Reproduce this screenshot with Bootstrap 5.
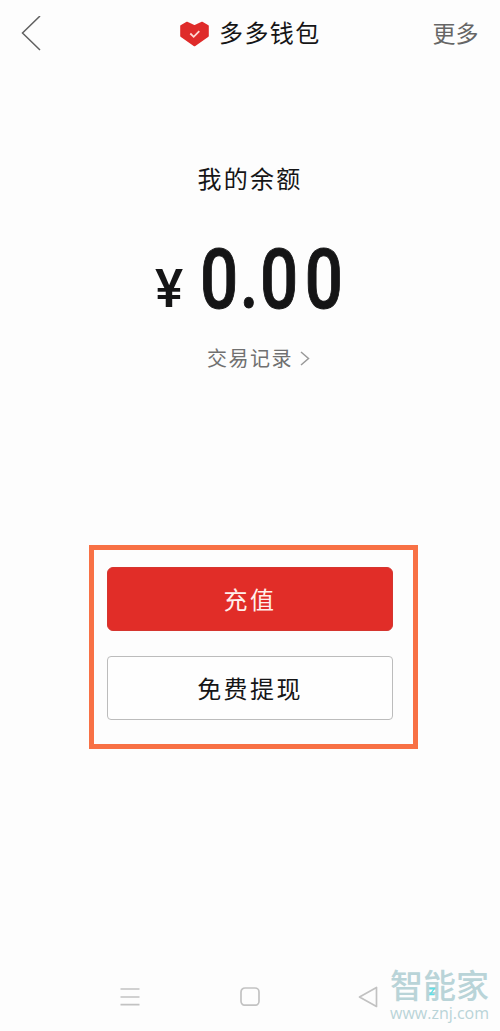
<!DOCTYPE html>
<html lang="zh-CN">
<head>
<meta charset="utf-8">
<meta name="viewport" content="width=device-width, initial-scale=1">
<title>多多钱包</title>
<link href="https://cdn.jsdelivr.net/npm/bootstrap@5.3.0/dist/css/bootstrap.min.css" rel="stylesheet">
<style>
body{background:#fdfdfd;color:#151516;font-family:"Noto Sans CJK SC",sans-serif;overflow:hidden}
.screen{width:500px;height:1031px}
.topbar{height:68px;display:grid;grid-template-columns:180px 1fr 180px;align-items:center}
.topbar svg,.history svg,.sysbar svg{display:block;flex:none}
.back{padding-left:20px}
.wallet-title{font-size:24px;line-height:34px;letter-spacing:1.4px;margin-left:10px;padding-bottom:4px;white-space:nowrap}
.more{font-size:23px;line-height:34px;color:#666;padding:0 22px 4px 0}
.balance-label{margin-top:92px;line-height:36px;font-size:24px;letter-spacing:2.3px}
.amount{height:62px;margin-top:51px;padding-left:155px;font-family:Roboto,sans-serif;font-weight:500}
.yen{width:28px;font-size:53px;line-height:62px;padding-top:11px}
.digits{margin-left:17px;font-size:84px;line-height:66px;letter-spacing:8px;white-space:nowrap;transform:scaleX(.8);transform-origin:left;-webkit-text-stroke:1px #151516}
.tight{letter-spacing:2px}
.history{margin-top:34px;padding-left:207px;font-size:20px;line-height:30px;letter-spacing:1.5px;color:#707070}
.history svg{margin-left:7px}
.actions{width:329px;height:204px;margin:172px 0 0 89px;padding:17px 20px 0 13px;border:5px solid #f87145}
.action{height:64px;--bs-btn-border-radius:6px;--bs-btn-font-size:24px;--bs-btn-padding-y:0;letter-spacing:2.4px;line-height:58px}
.recharge{--bs-btn-bg:#e12d28;--bs-btn-color:#fff0ec;--bs-btn-border-color:#d5352f}
.withdraw{--bs-btn-bg:#fefefe;--bs-btn-color:#151516;--bs-btn-border-color:#bcbcbc;--bs-btn-border-radius:4px;margin-top:25px}
.sysbar{height:71px;padding-left:120px}
.sysbar .sys{margin-top:26px}
.sys-home{margin-left:100px}
.sys-back{margin-left:98px}
.brand{margin-left:11px;color:#b9d4d8;white-space:nowrap}
.brand-name{font-size:33px;line-height:34px;font-weight:500;margin-top:7px}
.brand-spark{position:absolute;left:38px;top:27px}
.brand-url{font-family:"Open Sans",sans-serif;font-size:16px;line-height:16px;margin-top:4px}
</style>
</head>
<body>
<main class="screen d-flex flex-column">
  <header class="topbar">
    <div class="back"><svg width="22" height="36" viewBox="0 0 22 36" fill="none" stroke="#606060" stroke-width="1.5"><path d="M20 0 2.5 17 20 34"/></svg></div>
    <div class="d-flex align-items-center">
      <svg width="29" height="26" viewBox="0 0 29 26"><path d="M7 1.5 14.5 5 22 1.5 28 5V15L14.5 24.5 1 15V5Z" fill="#df2b2a" stroke="#df2b2a" stroke-width="1.6" stroke-linejoin="round"/><path d="m10.3 12.5 3.4 3.3 5.6-5.6" fill="none" stroke="#ffd9d3" stroke-width="1.8"/></svg>
      <span class="wallet-title">多多钱包</span>
    </div>
    <div class="more text-end">更多</div>
  </header>
  <div class="balance-label text-center">我的余额</div>
  <div class="amount d-flex">
    <span class="yen">¥</span><span class="digits"><span class="tight">0.</span>00</span>
  </div>
  <div class="history d-flex align-items-center">交易记录<svg width="10" height="15" viewBox="0 0 10 15" fill="none" stroke="#999" stroke-width="1.5"><path d="m1 1 7.5 6.5L1 14"/></svg></div>
  <section class="actions d-flex flex-column">
    <button class="btn action recharge w-100" type="button">充值</button>
    <button class="btn action withdraw w-100" type="button">免费提现</button>
  </section>
  <footer class="sysbar d-flex mt-auto">
    <svg class="sys" width="20" height="20" viewBox="0 0 20 20" stroke="#c2c2c2" stroke-width="1.7"><path d="M.5 3h19M.5 11h19M.5 18.7h19"/></svg>
    <svg class="sys sys-home" width="20" height="20" viewBox="0 0 20 20"><rect x="1" y="2" width="18" height="17.2" rx="4" fill="none" stroke="#c2c2c2" stroke-width="1.7"/></svg>
    <svg class="sys sys-back" width="21" height="22" viewBox="0 0 21 22"><path d="M18.5 1.5V20.5L1.5 11Z" fill="none" stroke="#c2c2c2" stroke-width="1.7" stroke-linejoin="round"/></svg>
    <div class="brand position-relative"><div class="brand-name">智能家</div><svg class="brand-spark" width="8" height="9" viewBox="0 0 8 9" fill="none" stroke="#5fe0e6" stroke-width="1.3"><path d="M1.5 1.5H6.5L2 7.5H6.5"/></svg><div class="brand-url">www.znj.com</div></div>
  </footer>
</main>
<script src="https://cdn.jsdelivr.net/npm/bootstrap@5.3.0/dist/js/bootstrap.bundle.min.js"></script>
</body>
</html>
